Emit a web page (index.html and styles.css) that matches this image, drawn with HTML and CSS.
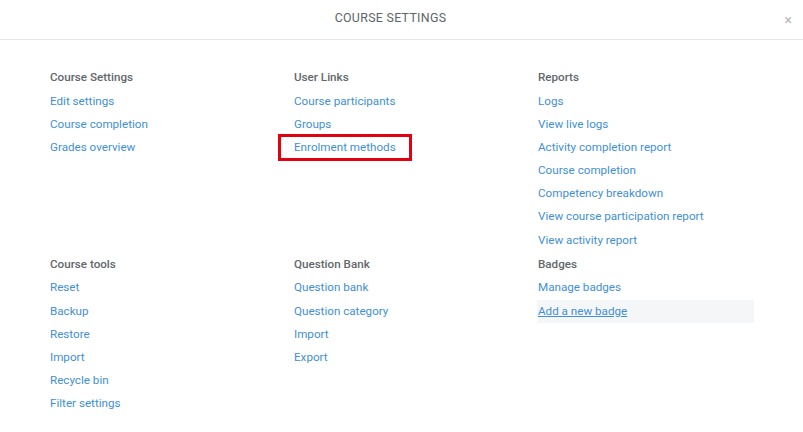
FILE: index.html
```html
<!DOCTYPE html>
<html>
<head>
<meta charset="utf-8">
<link rel="stylesheet" href="styles.css">
</head>
<body>
<div class="modal">
  <header class="modal-header">
    <h1 class="modal-title">COURSE SETTINGS</h1>
    <span class="close">×</span>
  </header>
  <div class="modal-body">
    <section class="group">
      <h2>Course Settings</h2>
      <a href="#">Edit settings</a>
      <a href="#">Course completion</a>
      <a href="#">Grades overview</a>
    </section>
    <section class="group">
      <h2>User Links</h2>
      <a href="#">Course participants</a>
      <a href="#">Groups</a>
      <a href="#" class="marked">Enrolment methods</a>
    </section>
    <section class="group">
      <h2>Reports</h2>
      <a href="#">Logs</a>
      <a href="#">View live logs</a>
      <a href="#">Activity completion report</a>
      <a href="#">Course completion</a>
      <a href="#">Competency breakdown</a>
      <a href="#">View course participation report</a>
      <a href="#">View activity report</a>
    </section>
    <section class="group">
      <h2>Course tools</h2>
      <a href="#">Reset</a>
      <a href="#">Backup</a>
      <a href="#">Restore</a>
      <a href="#">Import</a>
      <a href="#">Recycle bin</a>
      <a href="#">Filter settings</a>
    </section>
    <section class="group">
      <h2>Question Bank</h2>
      <a href="#">Question bank</a>
      <a href="#">Question category</a>
      <a href="#">Import</a>
      <a href="#">Export</a>
    </section>
    <section class="group">
      <h2>Badges</h2>
      <a href="#">Manage badges</a>
      <a href="#" class="hover">Add a new badge</a>
    </section>
  </div>
</div>
</body>
</html>
```
FILE: styles.css
```css
* { box-sizing: border-box; }
html, body { margin: 0; padding: 0; background: #fff; }
body { font-family: Roboto, "Liberation Sans", Arial, sans-serif; font-size: 11.65px; color: #5a5f63; }
.modal { width: 803px; }
.modal-header {
  height: 40px;
  border-bottom: 1px solid #e6e6e6;
  display: flex;
  align-items: center;
  justify-content: center;
  position: relative;
  padding-right: 22px;
}
.modal-title {
  margin: 0;
  font-size: 12.4px;
  font-weight: 400;
  color: #5f6468;
  padding-bottom: 5px;
  letter-spacing: 0.3px;
}
.close {
  position: absolute;
  right: 11px;
  top: 12px;
  font-size: 14px;
  color: #b8b8b8;
  line-height: 16px;
}
.modal-body {
  display: grid;
  grid-template-columns: 244px 244px 216px;
  padding: 25px 0 0 50px;
}
.group {
  display: flex;
  flex-direction: column;
  align-items: flex-start;
}
.group h2 {
  margin: 0;
  font-size: 11.65px;
  font-weight: 500;
  color: #62676b;
  line-height: 24.6px;
}
.group a {
  color: #4290d2;
  text-decoration: none;
  line-height: 23.17px;
}
.group a.hover {
  text-decoration: underline;
  background: #f5f6f8;
  align-self: stretch;
  margin-left: -1px;
  padding-left: 1px;
}
.group a.marked {
  outline: 3px solid #e3000f;
  outline-offset: -1px;
  padding: 0 14px;
  margin-left: -14px;
}
```
